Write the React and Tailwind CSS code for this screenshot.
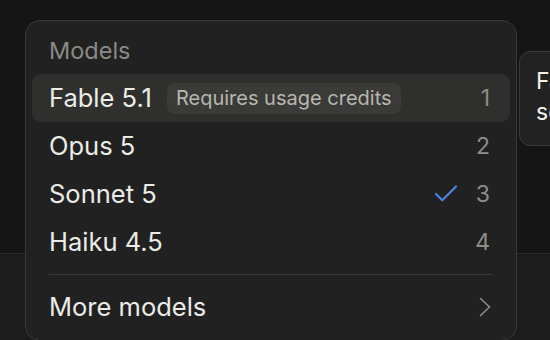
import React from "react";

const font = { fontFamily: "Inter, 'Noto Sans', sans-serif" };

function Row({ name, badge, num, checked, active }) {
  return (
    <div
      className={`flex h-[48px] items-center rounded-[9px] pl-[17px] pr-[20px] ${
        active ? "bg-[#2f2f2e]" : ""
      }`}
    >
      <span className="text-[25.5px] leading-none tracking-[0px] text-[#ecece6]">{name}</span>
      {badge && (
        <span className="ml-[15px] flex h-[31px] items-center rounded-[8px] bg-[#3a3a38] px-[9px] text-[20px] tracking-[0px] text-[#b7b7ae]">
          {badge}
        </span>
      )}
      <div className="ml-auto flex items-center">
        {checked && (
          <svg width="30" height="30" viewBox="0 0 24 24" fill="none" stroke="#4d82e3" strokeWidth="1.7" strokeLinecap="round" strokeLinejoin="round" className="mr-[15px]">
            <path d="M20 6 9 17l-5-5" />
          </svg>
        )}
        <span className="text-[23px] leading-none text-[#8d8d89]">{num}</span>
      </div>
    </div>
  );
}

export default function App() {
  return (
    <div className="relative h-[340px] w-[550px] overflow-hidden bg-[#1c1c1c]" style={font}>
      <div className="h-[254px] border-b border-[#2c2c2c] bg-[#151515]" />

      <div className="absolute left-[25px] top-[20px] h-[321px] w-[492px] rounded-[15px] border border-[#393939] bg-[#212121] px-[6px] pt-[16px]">
        <div className="flex h-[28px] items-center pl-[17px] text-[23.5px] tracking-[0px] text-[#8a8a85]">Models</div>
        <div className="mt-[9px]">
          <Row name="Fable 5.1" badge="Requires usage credits" num="1" active />
          <Row name="Opus 5" num="2" />
          <Row name="Sonnet 5" num="3" checked />
          <Row name="Haiku 4.5" num="4" />
        </div>
        <div className="mx-[17px] my-[8px] h-px bg-[#3a3a3a]" />
        <div className="flex h-[48px] items-center pl-[17px] pr-[19px]">
          <span className="text-[25.5px] leading-none tracking-[0px] text-[#ecece6]">More models</span>
          <svg className="ml-auto" width="12" height="20" viewBox="0 0 12 20" fill="none" stroke="#8d8d89" strokeWidth="1.6" strokeLinecap="round" strokeLinejoin="round">
            <path d="M1.5 1.5 10.5 10 1.5 18.5" />
          </svg>
        </div>
      </div>

      <div className="absolute left-[519px] top-[51px] h-[95px] w-[220px] rounded-[11px] border border-[#3a3a3a] bg-[#222222] pl-[16px] pt-[14px] text-[23px] leading-[31px] text-[#f2f2ee]">
        <div>Fable 5.1 is</div>
        <div>something</div>
      </div>
    </div>
  );
}
